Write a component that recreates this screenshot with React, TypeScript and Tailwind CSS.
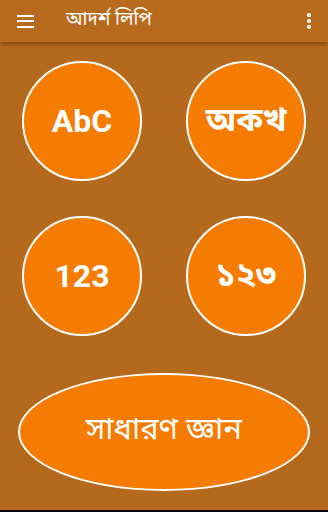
import { EllipsisVertical } from 'lucide-react';

const bn = { fontFamily: '"Noto Sans Bengali", "Noto Sans", Roboto, sans-serif' };

function Circle({ label, bengali }: { label: string; bengali?: boolean }) {
  return (
    <button
      className={
        'w-[120px] h-[120px] rounded-full bg-[#f57c00] border-2 border-white flex items-center justify-center text-white font-bold ' +
        (bengali ? 'text-[33px] pt-[3px]' : 'text-[32px]')
      }
      style={bengali ? bn : { fontFamily: 'Roboto, sans-serif' }}
    >
      {label}
    </button>
  );
}

export default function App() {
  return (
    <div className="w-[328px] h-[512px] flex flex-col bg-[#b4691c] overflow-hidden">
      <header className="h-[42px] bg-[#b86b1d] flex items-center shadow-[0_2px_4px_rgba(0,0,0,0.3)] relative z-10 shrink-0">
        <div className="w-[17px] ml-[17px] flex flex-col gap-[3.5px]">
          <span className="h-[2px] bg-white" />
          <span className="h-[2px] bg-white" />
          <span className="h-[2px] bg-white" />
        </div>
        <h1 className="ml-[32px] text-white text-[18.5px] leading-none" style={bn}>
          আদর্শ লিপি
        </h1>
        <EllipsisVertical className="ml-auto mr-[9px] w-[20px] h-[20px] text-white" strokeWidth={3} />
      </header>

      <main className="flex-1 flex flex-col items-center pt-[19px]">
        <div className="grid grid-cols-2 gap-x-[44px] gap-y-[35px]">
          <Circle label="AbC" />
          <Circle label="অকখ" bengali />
          <Circle label="123" />
          <Circle label="১২৩" bengali />
        </div>
        <button
          className="mt-[37px] w-[292px] h-[118px] rounded-[50%] bg-[#f57c00] border-2 border-white flex items-center justify-center text-white text-[31px]"
          style={bn}
        >
          সাধারণ জ্ঞান
        </button>
      </main>

      <div className="h-[2px] bg-black shrink-0" />
    </div>
  );
}
